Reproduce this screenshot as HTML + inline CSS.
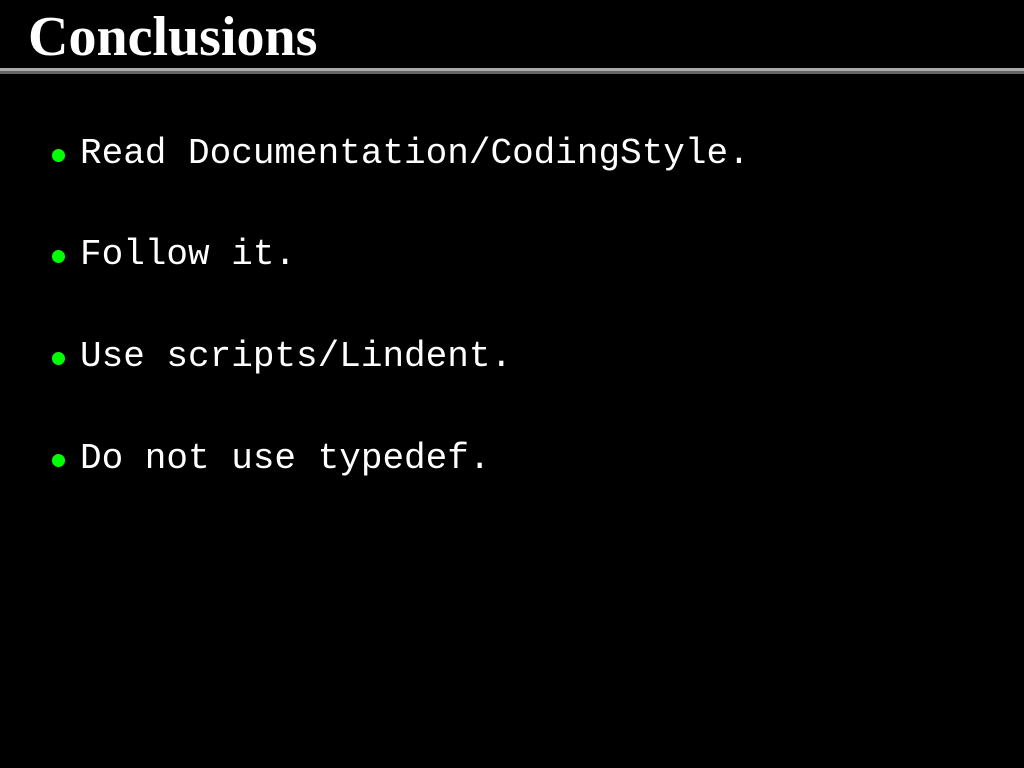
<!DOCTYPE html>
<html><head><style>
body{margin:0;width:1024px;height:768px;background:#000;overflow:hidden;position:relative}
h1{position:absolute;left:28px;top:9px;margin:0;font:bold 56px "Liberation Serif",serif;color:#fff;line-height:1}
.l1{position:absolute;left:0;top:68px;width:1024px;height:3px;background:#aaa}
.l2{position:absolute;left:0;top:71px;width:1024px;height:3px;background:#666}
.i{position:absolute;left:80px;font:36px "Liberation Mono",monospace;color:#fff;line-height:1;white-space:pre}
.b{position:absolute;left:52px;width:13px;height:13px;border-radius:50%;background:#0f0}
</style></head><body>
<h1>Conclusions</h1><div class="l1"></div><div class="l2"></div>
<div class="b" style="top:149px"></div><div class="i" style="top:136px">Read Documentation/CodingStyle.</div>
<div class="b" style="top:250px"></div><div class="i" style="top:237px">Follow it.</div>
<div class="b" style="top:352px"></div><div class="i" style="top:339px">Use scripts/Lindent.</div>
<div class="b" style="top:454px"></div><div class="i" style="top:441px">Do not use typedef.</div>
</body></html>
